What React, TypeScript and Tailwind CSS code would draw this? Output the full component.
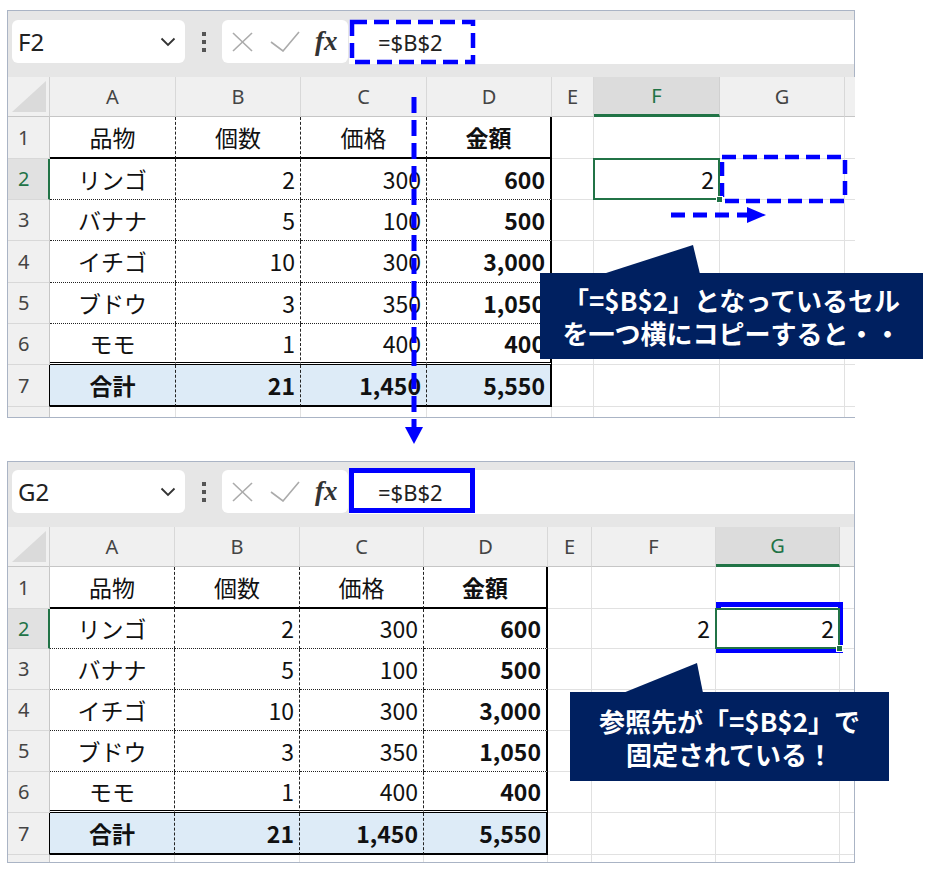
import React from 'react';

const DATA: string[][] = [
  ['品物', '個数', '価格', '金額'],
  ['リンゴ', '2', '300', '600'],
  ['バナナ', '5', '100', '500'],
  ['イチゴ', '10', '300', '3,000'],
  ['ブドウ', '3', '350', '1,050'],
  ['モモ', '1', '400', '400'],
  ['合計', '21', '1,450', '5,550'],
];

const LETTERS = ['A', 'B', 'C', 'D', 'E', 'F', 'G'];

type Cfg = {
  name: string;
  cols: string;
  rows: string;
  bar: string;
  activeCol: number;
  g2: string;
};

const TOP: Cfg = {
  name: 'F2',
  cols: 'grid-cols-[42px_126px_125px_126px_125px_42px_126px_125px_1fr]',
  rows: 'grid-rows-[40px_42px_41px_41px_42px_41px_41px_42px_10px]',
  bar: 'h-[66px] pt-[9px]',
  activeCol: 5,
  g2: '',
};

const BOTTOM: Cfg = {
  name: 'G2',
  cols: 'grid-cols-[42px_125px_125px_124px_124px_44px_124px_124px_1fr]',
  rows: 'grid-rows-[40px_42px_40px_41px_41px_41px_41px_42px_7px]',
  bar: 'h-[65px] pt-[8px]',
  activeCol: 6,
  g2: '2',
};

function FormulaBar({ cfg }: { cfg: Cfg }) {
  return (
    <div className={`flex items-start ${cfg.bar}`}>
      <div className="ml-[4px] flex h-[43px] w-[173px] items-center justify-between rounded-[6px] bg-white pl-[6px] pr-[9px]">
        <span className="font-['Noto_Sans',sans-serif] text-[24px] leading-none text-[#222]">{cfg.name}</span>
        <svg width="16" height="10" viewBox="0 0 16 10">
          <polyline points="1.5,1.5 8,8 14.5,1.5" fill="none" stroke="#333" strokeWidth="1.8" />
        </svg>
      </div>
      <div className="flex h-[43px] w-[37px] flex-col items-center justify-center gap-[4px]">
        <div className="h-[4px] w-[4px] bg-[#555]" />
        <div className="h-[4px] w-[4px] bg-[#555]" />
        <div className="h-[4px] w-[4px] bg-[#555]" />
      </div>
      <div className="flex h-[43px] w-[126px] items-center rounded-[6px] bg-white pl-[10px]">
        <svg width="21" height="20" viewBox="0 0 21 20">
          <line x1="1" y1="1" x2="20" y2="19" stroke="#ababab" strokeWidth="1.6" />
          <line x1="20" y1="1" x2="1" y2="19" stroke="#ababab" strokeWidth="1.6" />
        </svg>
        <svg className="ml-[17px]" width="30" height="21" viewBox="0 0 30 21">
          <polyline points="1,11 13,20 29,1" fill="none" stroke="#ababab" strokeWidth="1.6" />
        </svg>
        <span className="ml-[15px] font-['Liberation_Serif',serif] text-[27px] font-semibold italic leading-none text-[#333]">fx</span>
      </div>
      <div className="ml-[1px] flex h-[44px] flex-1 items-center bg-white pl-[29px] font-['Noto_Sans',sans-serif] text-[22px] text-[#222]">
        =$B$2
      </div>
    </div>
  );
}

function Grid({ cfg }: { cfg: Cfg }) {
  const cells: React.ReactNode[] = [];
  cells.push(
    <div key="corner" className="relative border-r border-b border-r-[#d0d0d0] border-b-[#c6c6c6] bg-[#f0f0f0]">
      <svg className="absolute right-[3px] bottom-[4px]" width="34" height="31" viewBox="0 0 34 31">
        <polygon points="0,31 34,31 34,0" fill="#dadada" />
      </svg>
    </div>
  );
  LETTERS.forEach((l, i) => {
    const active = i === cfg.activeCol;
    cells.push(
      <div
        key={'h' + l}
        className={
          "flex items-center justify-center border-r border-b font-['Noto_Sans',sans-serif] text-[20px] " +
          (active
            ? 'border-r-[#d0d0d0] border-b-[3px] border-b-[#217346] bg-[#dcdcdc] text-[#217346]'
            : 'border-r-[#d8d8d8] border-b-[#c6c6c6] bg-[#f0f0f0] text-[#444]')
        }
      >
        {l}
      </div>
    );
  });
  cells.push(<div key="hrest" className="border-b border-b-[#c6c6c6] bg-[#f0f0f0]" />);

  for (let r = 0; r < 8; r++) {
    const rowNum = r + 1;
    const isPartial = r === 7;
    const activeRow = rowNum === 2;
    cells.push(
      <div
        key={'rh' + r}
        className={
          "flex items-center pl-[10px] font-['Noto_Sans',sans-serif] text-[20px] " +
          (isPartial ? 'border-r border-r-[#c6c6c6] bg-[#f0f0f0] ' : 'border-b border-b-[#d8d8d8] ') +
          (activeRow
            ? 'border-r-2 border-r-[#217346] bg-[#e1e1e1] text-[#217346]'
            : isPartial
            ? ''
            : rowNum === 7
            ? 'border-r border-r-black bg-[#f0f0f0] text-[#444]'
            : 'border-r border-r-[#c6c6c6] bg-[#f0f0f0] text-[#444]')
        }
      >
        {isPartial ? '' : rowNum}
      </div>
    );
    for (let c = 0; c < 8; c++) {
      const key = `c${r}-${c}`;
      if (c < 4 && r < 7) {
        const ri = r;
        const ci = c;
        let cls =
          "flex items-center px-[5px] font-['Noto_Sans_CJK_JP',sans-serif] text-[23px] text-[#111] ";
        cls += ci === 0 || ri === 0 ? 'justify-center ' : 'justify-end ';
        if (ri === 6 || ci === 3) cls += 'font-bold ';
        cls += ri === 6 ? 'bg-[#ddebf7] ' : 'bg-white ';
        cls +=
          ci < 3
            ? 'border-r border-r-[#222] [border-right-style:dashed] '
            : 'border-r-2 border-r-black ';
        if (ri === 0) cls += 'border-b-2 border-b-black ';
        else if (ri <= 4) cls += 'border-b border-b-[#222] [border-bottom-style:dotted] ';
        else if (ri === 5) cls += 'border-b-[3px] border-b-black [border-bottom-style:double] ';
        else cls += 'border-b-2 border-b-black ';
        cells.push(
          <div key={key} className={cls}>
            {DATA[ri][ci]}
          </div>
        );
        continue;
      }
      const isF2 = r === 1 && c === 5;
      const isG2 = r === 1 && c === 6;
      const active = (isF2 && cfg.activeCol === 5) || (isG2 && cfg.activeCol === 6);
      let text = '';
      if (isF2) text = '2';
      if (isG2) text = cfg.g2;
      const base =
        "flex items-center justify-end px-[5px] font-['Noto_Sans_CJK_JP',sans-serif] text-[23px] text-[#111] bg-white " +
        (c < 7 ? 'border-r border-r-[#e1e1e1] ' : '') +
        (isPartial ? '' : 'border-b border-b-[#e1e1e1] ') +
        (active ? 'relative z-10 ' : '');
      cells.push(
        <div key={key} className={base}>
          {text}
          {active && (
            <>
              <div className="absolute -top-[1px] -left-[1px] -right-[1px] -bottom-[1px] border-2 border-[#217346]" />
              <div className="absolute -right-[4px] -bottom-[4px] h-[7px] w-[7px] border border-white bg-[#217346]" />
            </>
          )}
        </div>
      );
    }
  }

  return <div className={`grid ${cfg.cols} ${cfg.rows}`}>{cells}</div>;
}

function Panel({ cfg }: { cfg: Cfg }) {
  return (
    <div className="w-[848px] border border-[#aab4c5] bg-[#e6e6e6]">
      <FormulaBar cfg={cfg} />
      <Grid cfg={cfg} />
    </div>
  );
}

export default function App() {
  return (
    <div className="relative h-[870px] w-[933px] overflow-hidden bg-white pl-[7px] pt-[10px]">
      <div className="flex flex-col gap-[43px]">
        <Panel cfg={TOP} />
        <Panel cfg={BOTTOM} />
      </div>

      <svg className="pointer-events-none absolute left-0 top-0" width="933" height="870" viewBox="0 0 933 870">
        <rect x="352" y="22" width="121" height="40" fill="none" stroke="#0000ff" strokeWidth="4.5" strokeDasharray="15 7" />
        <rect x="722" y="157" width="123" height="44" fill="none" stroke="#0000ff" strokeWidth="4.5" strokeDasharray="14 7" />
        <line x1="414" y1="97" x2="414" y2="428" stroke="#0000ff" strokeWidth="5" strokeDasharray="16 7" />
        <polygon points="405,427 423,427 414,444" fill="#0000ff" />
        <line x1="671" y1="215" x2="748" y2="215" stroke="#0000ff" strokeWidth="5" strokeDasharray="14 8" />
        <polygon points="747,207 747,223 766,215" fill="#0000ff" />
        <rect x="351.5" y="470.5" width="121" height="40" fill="none" stroke="#0000ff" strokeWidth="5" />
        <rect x="718.5" y="604.5" width="122" height="46" fill="none" stroke="#0000ff" strokeWidth="5" />
        <polygon points="603,274 693,245 700,274" fill="#002060" />
        <polygon points="623,693 697,663 703,693" fill="#002060" />
      </svg>

      <div className="absolute left-[540px] top-[273px] flex h-[86px] w-[383px] flex-col items-center justify-center bg-[#002060] font-['Noto_Sans_CJK_JP',sans-serif] text-[26px] font-bold leading-[33px] text-white">
        <div>「=$B$2」となっているセル</div>
        <div>を一つ横にコピーすると・・</div>
      </div>
      <div className="absolute left-[570px] top-[692px] flex h-[89px] w-[319px] flex-col items-center justify-center bg-[#002060] font-['Noto_Sans_CJK_JP',sans-serif] text-[26px] font-bold leading-[33px] text-white">
        <div>参照先が「=$B$2」で</div>
        <div>固定されている！</div>
      </div>
    </div>
  );
}
